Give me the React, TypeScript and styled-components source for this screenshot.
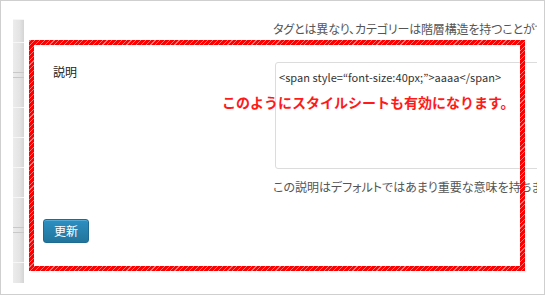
import styled, { createGlobalStyle } from 'styled-components';

const GlobalStyle = createGlobalStyle`
    html, body {
        margin: 0;
        padding: 0;
        background: #fff;
    }
    body {
        font-family: "Noto Sans CJK JP", "Noto Sans", sans-serif;
        color: #333;
    }
`

const Frame = styled.div`
    position: relative;
    box-sizing: border-box;
    width: 545px;
    height: 295px;
    border: 1px solid #cfcfcf;
    display: flex;
    overflow: hidden;
`

const Menu = styled.div`
    margin: 18px 0 0 12px;
    width: 11px;
    height: 264px;
    display: flex;
    flex-direction: column;
    flex-shrink: 0;
`

const MenuItem = styled.div<{ $h: number; $sep?: boolean }>`
    height: ${p => p.$h}px;
    box-sizing: border-box;
    border-top: 1px solid ${p => (p.$sep ? '#c8c8c8' : '#f6f6f6')};
    background: linear-gradient(to right, #ececec, #e4e4e4 60%, #d4d4d4);
`

const Content = styled.div`
    width: 513px;
    flex-shrink: 0;
    overflow: hidden;
    padding: 20px 0 0 19px;
    box-sizing: border-box;
    font-size: 12px;
    line-height: 16px;
    font-feature-settings: 'palt';
`

const Hint = styled.div`
    margin-left: 230px;
    white-space: nowrap;
    letter-spacing: -0.15px;
    color: #555;
`

const Row = styled.div`
    display: flex;
    margin-top: 25px;
`

const Label = styled.div`
    width: 220px;
    padding: 2px 0 0 10px;
    flex-shrink: 0;
    color: #222;
`

const Field = styled.div`
    display: flex;
    flex-direction: column;
    min-width: 0;
`

const TextArea = styled.div`
    margin-left: 2px;
    width: 300px;
    height: 107px;
    box-sizing: border-box;
    border: 1px solid #dcdcdc;
    border-radius: 3px;
    padding: 6px 3px;
    white-space: nowrap;
    color: #333;
    font-feature-settings: normal;
    font-size: 11px;
    letter-spacing: 0.05px;
`

const Description = styled.div`
    margin-top: 10px;
    white-space: nowrap;
    color: #555;
`

const Submit = styled.button`
    margin-top: 24px;
    width: 46px;
    height: 24px;
    border: 1px solid #1e6a92;
    border-radius: 3px;
    background: linear-gradient(to bottom, #2e8fc2, #21759b);
    box-shadow: inset 0 1px 0 rgba(120, 200, 235, 0.5);
    color: #fff;
    font-family: inherit;
    font-size: 12px;
    line-height: 1;
    padding: 0;
`

const Annotation = styled.div`
    position: absolute;
    left: 28px;
    top: 39px;
    width: 496px;
    height: 231px;
    box-sizing: border-box;
    border: 5px solid transparent;
    border-image: repeating-linear-gradient(-45deg, #ff0000 0 2.6px, #ff7070 2.6px 3.4px) 5;
`

const Note = styled.div`
    position: absolute;
    left: 188px;
    top: 49px;
    font-size: 14px;
    line-height: 16px;
    font-weight: bold;
    color: #ff1a1a;
    white-space: nowrap;
`

const menuItems = [
    { h: 23 }, { h: 30 }, { h: 5, sep: true }, { h: 30, sep: true }, { h: 30 },
    { h: 30 }, { h: 30 }, { h: 30 }, { h: 5, sep: true }, { h: 30, sep: true }, { h: 21 },
]

const App = () => (
    <>
        <GlobalStyle />
        <Frame>
            <Menu>
                {menuItems.map((m, i) => <MenuItem key={i} $h={m.h} $sep={m.sep} />)}
            </Menu>
            <Content>
                <Hint>タグとは異なり、カテゴリーは階層構造を持つことができます。</Hint>
                <Row>
                    <Label>説明</Label>
                    <Field>
                        <TextArea>&lt;span style=“font-size:40px;”&gt;aaaa&lt;/span&gt;</TextArea>
                        <Description>この説明はデフォルトではあまり重要な意味を持ちません。</Description>
                    </Field>
                </Row>
                <Submit>更新</Submit>
            </Content>
            <Annotation>
                <Note>このようにスタイルシートも有効になります。</Note>
            </Annotation>
        </Frame>
    </>
);

export default App;
